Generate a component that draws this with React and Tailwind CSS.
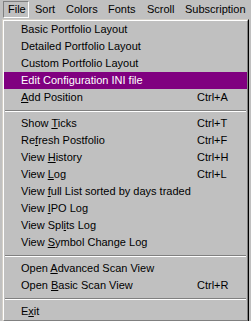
import React from "react";

// menubar items with the widths that put each caption where the reference has it
const menuBar = [
  { name: "Sort", w: "w-[31px]" },
  { name: "Colors", w: "w-[42px]" },
  { name: "Fonts", w: "w-[39px]" },
  { name: "Scroll", w: "w-[38px]" },
  { name: "Subscription", w: "w-[72px]" },
];

// label parts: [before, mnemonic, after]
const items = [
  { label: ["Basic Portfolio Layout"] },
  { label: ["Detailed Portfolio Layout"] },
  { label: ["Custom Portfolio Layout"] },
  { label: ["Edit Configuration INI file"], active: true },
  { label: ["", "A", "dd Position"], key: "Ctrl+A" },
  { sep: true },
  { label: ["Show ", "T", "icks"], key: "Ctrl+T" },
  { label: ["Re", "f", "resh Postfolio"], key: "Ctrl+F" },
  { label: ["View ", "H", "istory"], key: "Ctrl+H" },
  { label: ["View ", "L", "og"], key: "Ctrl+L" },
  { label: ["View ", "f", "ull List sorted by days traded"] },
  { label: ["View ", "I", "PO Log"] },
  { label: ["View Spl", "i", "ts Log"] },
  { label: ["View ", "S", "ymbol Change Log"] },
  { sep: true },
  { label: ["Open ", "A", "dvanced Scan View"] },
  { label: ["Open ", "B", "asic Scan View"], key: "Ctrl+R" },
  { sep: true },
  { label: ["E", "x", "it"] },
];

function Label({ parts }) {
  const [a, m, b] = parts;
  return (
    <span>
      {a}
      {m && <span className="underline underline-offset-[1px]">{m}</span>}
      {b}
    </span>
  );
}

export default function App() {
  return (
    <div
      className="w-[251px] h-[321px] overflow-hidden bg-[#c0c0c0] text-[11px] leading-none text-black"
      style={{ fontFamily: '"Liberation Sans", Arial, sans-serif' }}
    >
      <div className="flex h-[19px] items-center pl-[3px]">
        <div className="flex h-[17px] w-[27px] items-center border border-t-[#808080] border-l-[#808080] border-b-white border-r-white pl-[4px]">
          File
        </div>
        {menuBar.map((m) => (
          <div key={m.name} className={`flex h-[17px] shrink-0 items-center whitespace-nowrap pl-[6px] ${m.w}`}>
            {m.name}
          </div>
        ))}
      </div>

      <div className="ml-[2px] w-[247px] border border-t-[#d4d0c8] border-l-[#d4d0c8] border-b-black border-r-black">
        <div className="border border-t-white border-l-white border-b-[#808080] border-r-[#808080]">
          {items.map((it, i) =>
            it.sep ? (
              <div key={i} className="flex h-[9px] flex-col justify-center px-[1px]">
                <div className="h-px bg-[#808080]" />
                <div className="h-px bg-white" />
              </div>
            ) : (
              <div
                key={i}
                className={`flex h-[17px] items-center pl-[17px] ${
                  it.active ? "bg-[#800080] text-white" : ""
                }`}
              >
                <div className="w-[176px] whitespace-nowrap">
                  <Label parts={it.label} />
                </div>
                {it.key && <div className="whitespace-nowrap">{it.key}</div>}
              </div>
            )
          )}
        </div>
      </div>
    </div>
  );
}
